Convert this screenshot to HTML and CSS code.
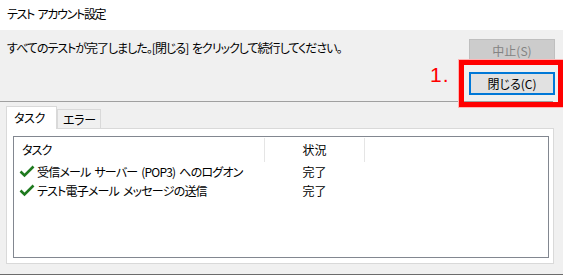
FILE: index.html
```html
<!DOCTYPE html>
<html lang="ja">
<head>
    <meta charset="UTF-8">
    <title>テスト アカウント設定</title>
    <link rel="stylesheet" href="styles.css">
</head>
<body>
    <div class="titlebar">テスト アカウント設定</div>
    <div class="head">
        <div class="message">すべてのテストが完了しました。[閉じる] をクリックして続行してください。</div>
        <div class="buttons">
            <button class="btn disabled">中止(S)</button>
            <button class="btn primary">閉じる(C)</button>
        </div>
        <!-- annotation over the close button -->
        <div class="mark-num">1.</div>
        <div class="mark-box"></div>
    </div>
    <div class="separator"></div>
    <div class="tabs">
        <div class="tab active">タスク</div>
        <div class="tab">エラー</div>
    </div>
    <div class="panel">
        <div class="listbox">
            <div class="row header">
                <div class="col-task">タスク</div>
                <div class="col-state">状況</div>
                <div class="col-rest"></div>
            </div>
            <div class="row">
                <div class="col-task">
                    <svg class="check" width="16" height="13" viewBox="0 0 16 13"><path d="M1.5 6.5 L5.5 10.5 L14.5 1.5" fill="none" stroke="#1f7a1f" stroke-width="2.6"/></svg>
                    <span class="task-name">受信メール サーバー (POP3) へのログオン</span>
                </div>
                <div class="col-state">完了</div>
            </div>
            <div class="row">
                <div class="col-task">
                    <svg class="check" width="16" height="13" viewBox="0 0 16 13"><path d="M1.5 6.5 L5.5 10.5 L14.5 1.5" fill="none" stroke="#1f7a1f" stroke-width="2.6"/></svg>
                    <span class="task-name">テスト電子メール メッセージの送信</span>
                </div>
                <div class="col-state">完了</div>
            </div>
        </div>
    </div>
    <div class="bottom-line"></div>
</body>
</html>
```

FILE: styles.css
```css
body {
    margin: 0;
    background-color: #f0f0f0;
    font-family: "Noto Sans CJK JP", "Noto Sans", sans-serif;
    font-size: 12px;
    font-feature-settings: "palt";
    letter-spacing: -0.8px;
    color: #000;
    overflow: hidden;
    height: 275px;
}
.titlebar {
    height: 30px;
    line-height: 28px;
    background-color: #fff;
    padding-left: 7px;
    letter-spacing: -1.3px;
    word-spacing: 2px;
}
.head {
    position: relative;
    display: flex;
    justify-content: space-between;
    align-items: flex-start;
    padding: 9px 8px 0 7px;
}
.message {
    line-height: 18px;
    letter-spacing: -1px;
    word-spacing: 2px;
}
.buttons {
    display: flex;
    flex-direction: column;
    gap: 10px;
    width: 86px;
}
.btn {
    height: 23px;
    font-family: inherit;
    font-size: 12px;
    font-feature-settings: "palt";
    letter-spacing: 0;
    padding: 0;
}
.btn.disabled {
    background-color: #cccccc;
    border: 1px solid #bfbfbf;
    color: #838383;
}
.btn.primary {
    background-color: #e1e1e1;
    border: 2px solid #0078d7;
    color: #000;
}
.mark-box {
    position: absolute;
    left: 459px;
    top: 30px;
    width: 94px;
    height: 37px;
    border: 5px solid #ff0000;
    box-shadow: 0 0 0 1px #ffb4b4;
}
.mark-num {
    position: absolute;
    left: 430px;
    top: 33px;
    font-family: "Liberation Sans", sans-serif;
    font-size: 21px;
    letter-spacing: 1px;
    color: #ff0000;
}
.separator {
    height: 1px;
    background-color: #a0a0a0;
    margin: 6px 10px 0 0;
}
.tabs {
    display: flex;
    align-items: flex-end;
    padding: 3px 0 0 6px;
    height: 23px;
    position: relative;
    z-index: 1;
}
.tab {
    height: 19px;
    line-height: 19px;
    width: 44px;
    box-sizing: border-box;
    padding-left: 5px;
    white-space: nowrap;
    letter-spacing: -0.3px;
    border: 1px solid #d9d9d9;
    border-bottom: none;
    background-color: #f0f0f0;
}
.tab.active {
    height: 23px;
    line-height: 21px;
    width: 51px;
    background-color: #fff;
    padding-left: 7px;
    margin-bottom: -1px;
}
.panel {
    margin: 0 9px 0 6px;
    border: 1px solid #d9d9d9;
    background-color: #fff;
    padding: 7px 4px 0 6px;
    box-sizing: border-box;
    height: 136px;
}
.listbox {
    height: 122px;
    box-sizing: border-box;
    border: 1px solid #828790;
    padding-top: 1px;
}
.row {
    display: flex;
    height: 19px;
    line-height: 19px;
}
.row.header {
    height: 24px;
    line-height: 24px;
}
.col-task {
    width: 251px;
    padding-left: 5px;
    box-sizing: border-box;
    display: flex;
    align-items: center;
}
.task-name {
    white-space: nowrap;
    word-spacing: 2px;
}
.header .col-task {
    padding-left: 8px;
}
.col-state {
    width: 99px;
    text-align: center;
    letter-spacing: 0;
}
.header .col-task,
.header .col-state {
    border-right: 1px solid #e5e5e5;
}
.check {
    flex: none;
    margin-right: 2px;
}
.bottom-line {
    margin-top: 10px;
    height: 1px;
    background-color: #6b6b6b;
}
```
